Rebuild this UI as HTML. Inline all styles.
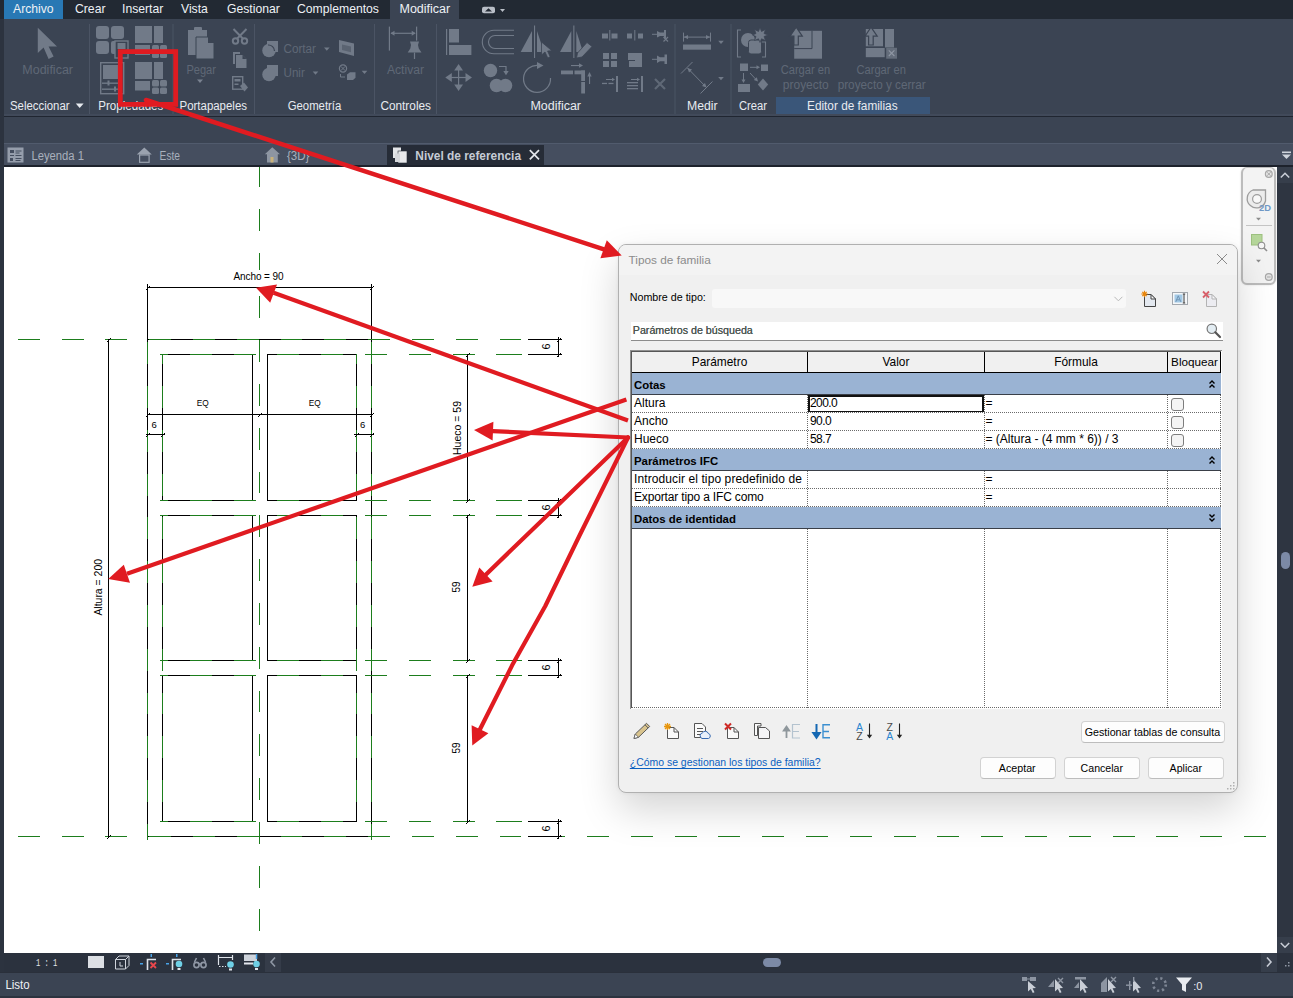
<!DOCTYPE html>
<html lang="es">
<head>
<meta charset="utf-8">
<title>Tipos de familia</title>
<style>
*{box-sizing:border-box;margin:0;padding:0}
html,body{width:1293px;height:998px;overflow:hidden;background:#3b4453;font-family:"Liberation Sans",sans-serif;font-size:12px;color:#e6e9ee}
.abs{position:absolute}
#app{position:relative;width:1293px;height:998px;overflow:hidden;background:#3b4453}
#menubar{left:0;top:0;width:1293px;height:19px;background:#222933}
#menubar span{position:absolute;top:1px;line-height:16px;font-size:12.2px;color:#eef1f5;white-space:nowrap}
#tab-archivo{left:4px;top:0;width:59px;height:19px;background:#2878b4}
#tab-modificar{left:390px;top:0;width:69px;height:19px;background:#3b4453}
#ribline{left:0;top:114px;width:1293px;height:3px;background:#202631;border-top:2px solid #414a5a}
#leftstrip{left:0;top:19px;width:4px;height:979px;background:#2c333f}
#vtabs{left:4px;top:143px;width:1289px;height:23px;background:#454e5f;border-top:1px solid #515b6d}
#vtab-active{left:387px;top:145px;width:157px;height:21px;background:#262c37}
#vline{left:4px;top:165px;width:1289px;height:2px;background:#1d222c}
#canvas{left:4px;top:167px;width:1273px;height:786px;background:#fff}
#vscroll{left:1277px;top:167px;width:16px;height:786px;background:#2e3541}
#vcb{left:4px;top:953px;width:1289px;height:19px;background:#2b323e}
#status{left:0;top:972px;width:1293px;height:26px;background:#3b4453;border-top:1px solid #2a303b;border-bottom:2px solid #2c333f}
#dlg{left:618px;top:244px;width:620px;height:549px;background:#f0f0f0;border:1px solid #b0b0b0;border-radius:8px;box-shadow:0 17px 38px rgba(0,0,0,.17),0 0 4px rgba(0,0,0,.06);color:#000;overflow:hidden}
#dlgin{left:-619px;top:-245px;width:1293px;height:998px}
.tx{position:absolute;white-space:nowrap;display:block}
.btn{position:absolute;height:22px;background:#fdfdfd;border:1px solid #d2d2d2;border-bottom-color:#bdbdbd;border-radius:4px}
.hd{height:1px;background-image:linear-gradient(90deg,#6a6a6a 50%,transparent 50%);background-size:2px 1px}
.vd{width:1px;background-image:linear-gradient(180deg,#6a6a6a 50%,transparent 50%);background-size:1px 2px}
</style>
</head>
<body>
<div id="app">
  <div id="menubar" class="abs">
    <div id="tab-archivo" class="abs"></div>
    <div id="tab-modificar" class="abs"></div>
    <span style="left:13px">Archivo</span>
    <span style="left:75px">Crear</span>
    <span style="left:122px">Insertar</span>
    <span style="left:181px">Vista</span>
    <span style="left:227px">Gestionar</span>
    <span style="left:297px">Complementos</span>
    <span style="left:399.5px;font-size:12.500px">Modificar</span>
    <svg class="abs" style="left:478px;top:3px" width="32" height="13" viewBox="0 0 32 13"><rect x="4" y="3.700" width="13" height="6.600" rx="2" fill="#b9bec7"/><path d="M7,8.500 L10.500,5.300 L14,8.500 Z" fill="#222933"/><path d="M22,6 L27,6 L24.500,9 Z" fill="#b9bec7"/></svg>
  </div>

<svg id="ribsvg" class="abs" style="left:0;top:0" width="1293" height="120" viewBox="0 0 1293 120">
<g fill="#717a88" stroke="none">
<!-- cursor -->
<path d="M37.8,27.8 L37.8,53 L43.6,47.6 L48.6,59 L53.6,56.6 L48.6,46.6 L57,46.4 Z"/>
<!-- propiedades icon1 -->
<rect x="96" y="26" width="13" height="13" rx="3"/><rect x="111" y="26" width="13" height="13" rx="3"/>
<rect x="96" y="41" width="13" height="13" rx="3"/><rect x="111" y="41" width="6" height="13" rx="2"/>
<rect x="115" y="41" width="13" height="17" fill="#3b4453" stroke="#717a88" stroke-width="1.4"/><rect x="117.500" y="43" width="8" height="6"/>
<!-- icon2 -->
<rect x="135" y="26" width="17" height="17"/><rect x="154" y="26" width="9" height="17"/><rect x="135" y="45" width="15" height="10"/>
<rect x="152" y="45" width="7" height="6" rx="1.5"/><rect x="160" y="45" width="7" height="6" rx="1.5"/><rect x="152" y="52" width="7" height="6" rx="1.5"/><rect x="160" y="52" width="7" height="6" rx="1.5"/>
<!-- icon3 -->
<rect x="100.700" y="62.700" width="23" height="31" fill="none" stroke="#717a88" stroke-width="1.4"/><rect x="103" y="65" width="18.500" height="14"/>
<rect x="102" y="82.500" width="20" height="1.400"/><rect x="102" y="88.500" width="20" height="1.400"/><rect x="107.500" y="80.500" width="2" height="5"/><rect x="114" y="86.500" width="2" height="5"/>
<!-- icon4 -->
<rect x="135" y="62" width="17" height="17"/><rect x="154" y="62" width="9" height="17"/><rect x="135" y="81" width="15" height="9.500"/>
<rect x="152" y="80" width="7" height="6.500" rx="1.500"/><rect x="160" y="80" width="7" height="6.500" rx="1.500"/><rect x="152" y="87.500" width="7" height="6.500" rx="1.500"/><rect x="160" y="87.500" width="7" height="6.500" rx="1.500"/>
<!-- paste -->
<rect x="188" y="30" width="19" height="25"/><rect x="194" y="27" width="8" height="4" rx="1"/>
<path d="M196,37 L208,37 L214,43 L214,59 L196,59 Z" stroke="#3b4453" stroke-width="1"/>
<path d="M208,37 L208,43 L214,43 Z" fill="#3b4453"/>
<path d="M197,79.500 L203,79.500 L200,83 Z" fill="#7a8391"/>
<!-- scissors -->
<g fill="none" stroke="#717a88" stroke-width="2"><circle cx="235.500" cy="41" r="2.700"/><circle cx="244.500" cy="41" r="2.700"/><path d="M233.500,29 L243,38.800 M246.500,29 L237,38.800"/></g>
<!-- copy -->
<path d="M233,52 L240,52 L240,54 L235,54 L235,64 L233,64 Z"/><path d="M236,55 L242.500,55 L246.500,59 L246.500,68 L236,68 Z"/><path d="M242.500,55 L242.500,59 L246.500,59 Z" fill="#3b4453"/>
<!-- match -->
<rect x="232.700" y="76.700" width="10" height="12.500" fill="none" stroke="#717a88" stroke-width="1.400"/><rect x="234.500" y="79" width="6" height="2.500"/><rect x="234.500" y="83.500" width="4" height="1.500"/>
<path d="M240,86 L244,82.500 L248,87.500 L244.500,91.500 Z"/>
<!-- cortar icon -->
<rect x="267" y="41" width="11" height="11"/><circle cx="269" cy="50.500" r="6.800"/><path d="M268,45 A6,6 0 0 1 274.500,51" fill="none" stroke="#3b4453" stroke-width="1.200"/>
<!-- unir icon -->
<rect x="267" y="65" width="11" height="11"/><circle cx="269" cy="74.500" r="6.800"/>
<path d="M324,47.600 L329.600,47.600 L326.800,50.800 Z"/><path d="M312.700,71.600 L318.300,71.600 L315.500,74.800 Z"/><path d="M361.700,70.800 L367.300,70.800 L364.500,74 Z"/>
<!-- geom icon 3 -->
<path d="M339,40 L354,43.500 L354,56 L339,52 Z"/><path d="M342,44.500 L351,46.500 L351,52.300 L342,50 Z" fill="#5a6371"/>
<!-- geom icon 4 -->
<circle cx="343" cy="68.500" r="3.600" fill="none" stroke="#717a88" stroke-width="1.200"/><path d="M340.800,66.300 L345.200,70.700 M345.200,66.300 L340.800,70.700" stroke="#717a88" stroke-width="1"/>
<path d="M340.500,74 L340.500,77 L345,77" fill="none" stroke="#717a88" stroke-width="1"/>
<path d="M347,74.500 L350,72.300 L355.500,72.300 L355.500,77.800 L353,80 L347,80 Z"/>
<!-- activar -->
<rect x="388.800" y="26.600" width="1.200" height="24"/><rect x="416" y="26.600" width="1.200" height="14"/><rect x="391" y="32.700" width="24" height="1.200"/>
<path d="M390.500,33.300 L394.500,30.800 L394.500,35.800 Z"/><path d="M415.700,33.300 L411.700,30.800 L411.700,35.800 Z"/>
<path d="M410,41.500 L419,41.500 L418,45 L418.800,48.500 L421.500,52.500 L407.700,52.500 L410.300,48.500 L411,45 Z"/><rect x="413.900" y="52.500" width="1.200" height="6.500"/>
<!-- align -->
<rect x="446" y="29" width="1.200" height="26"/><rect x="449" y="29" width="10" height="13.500"/><rect x="449" y="45" width="22.400" height="10"/>
<!-- move -->
<path d="M458.600,64 L463,70.500 L454.200,70.500 Z"/><path d="M458.600,91 L463,84.500 L454.200,84.500 Z"/><path d="M445.300,77.500 L451.800,73.100 L451.800,81.900 Z"/><path d="M472,77.500 L465.500,73.100 L465.500,81.900 Z"/>
<rect x="458" y="70" width="1.200" height="15"/><rect x="451" y="76.900" width="15" height="1.200"/>
<!-- offset -->
<g fill="none" stroke="#717a88" stroke-width="1.100"><path d="M514,30.300 L494,30.300 A11.700,11.700 0 0 0 494,53.700 L514,53.700"/><path d="M514,35.500 L495,35.500 A6.500,6.500 0 0 0 495,48.500 L514,48.500"/></g>
<!-- mirror pick -->
<path d="M520.700,52 L532,52 L532,31 Z"/><rect x="534" y="25.500" width="1.100" height="32.500"/><path d="M537,31 L537,52 L544,52 Z" />
<path d="M541.500,42 L541.500,55 L545,52 L547.800,58 L550.200,56.800 L547.600,51 L552,50.800 Z" stroke="#3b4453" stroke-width=".8"/>
<!-- mirror draw -->
<path d="M560,52 L571.300,52 L571.300,31 Z"/><rect x="573.300" y="25.500" width="1.100" height="32.500"/><path d="M576.300,31 L576.300,52 L583,52 Z"/>
<path d="M576.500,58 L577.500,53 L587,42.500 L592,46.500 L582,57 Z" stroke="#3b4453" stroke-width=".8"/>
<!-- copy circles -->
<circle cx="490.500" cy="70.500" r="6.700"/><circle cx="496.500" cy="85.500" r="6.800"/><circle cx="505.500" cy="85.500" r="6.800"/>
<path d="M499,66.500 L506,66.500 L506,72" fill="none" stroke="#717a88" stroke-width="1.200"/><path d="M503.300,71 L508.700,71 L506,75.300 Z"/>
<!-- rotate -->
<path d="M539,65.500 A13.500,13.500 0 1 0 550.500,78" fill="none" stroke="#717a88" stroke-width="1.200"/><path d="M537,62 L543.500,65.500 L537,69 Z"/>
<!-- trim -->
<rect x="561" y="70.500" width="12" height="3.800"/><rect x="574.500" y="70.500" width="10.500" height="3.800"/><rect x="581.200" y="70.500" width="3.800" height="10.500"/><rect x="581.200" y="82" width="3.800" height="11.500"/>
<rect x="571" y="65" width="10" height="1.100"/><path d="M583,65.500 L579,63.300 L579,67.700 Z"/><rect x="589" y="75" width="1.100" height="9"/><path d="M589.500,72 L587.300,76.500 L591.700,76.500 Z"/>
<!-- small icons col1 -->
<rect x="602" y="33.500" width="6" height="5"/><rect x="611.500" y="33.500" width="6" height="5"/><rect x="609.300" y="30" width="1" height="10.500"/>
<rect x="603" y="53" width="6" height="6"/><rect x="611" y="53" width="6" height="6"/><rect x="603" y="61" width="6" height="6"/><rect x="611" y="61" width="6" height="6"/>
<rect x="602" y="82.800" width="5" height="1.300"/><rect x="608.500" y="82.800" width="5" height="1.300"/><rect x="616" y="76" width="2" height="16"/><rect x="606" y="79" width="7" height="1"/><path d="M615,79.500 L612,77.800 L612,81.200 Z"/>
<!-- col2 -->
<rect x="627" y="33.500" width="5" height="5"/><rect x="638" y="33.500" width="5" height="5"/><rect x="634.300" y="30" width="1" height="10.500"/>
<path d="M628,53 L642,53 L642,67 L628,67 Z"/><rect x="628" y="60" width="7" height="7" fill="#3b4453"/><rect x="629" y="61" width="6" height="6"/>
<rect x="627" y="82" width="11" height="1.300"/><rect x="627" y="85" width="11" height="1.300"/><rect x="627" y="88" width="11" height="1.300"/><rect x="641" y="76" width="2" height="16"/><rect x="631" y="79" width="7" height="1"/><path d="M640,79.500 L637,77.800 L637,81.200 Z"/>
<!-- col3 pins -->
<rect x="652" y="33.800" width="5" height="1"/><path d="M657,31 L660,32.500 L664,32.500 L664,30 L666,30 L666,38.500 L664,38.500 L664,36 L660,36 L657,37.500 Z"/><path d="M663.500,37 L668,41.500 M668,37 L663.500,41.500" stroke="#717a88" stroke-width="1.200"/>
<rect x="652" y="58.800" width="5" height="1"/><path d="M657,55.500 L660,57.300 L664.500,57.300 L664.500,54.500 L667,54.500 L667,64 L664.500,64 L664.500,61.200 L660,61.200 L657,63 Z"/>
<path d="M655,79 L665,89 M665,79 L655,89" stroke="#5f6876" stroke-width="2.200"/>
<!-- measure -->
<rect x="683" y="32.600" width="1" height="9"/><rect x="710" y="32.600" width="1" height="9"/><rect x="684" y="36.600" width="26" height="1"/><path d="M684,37.100 L688,35 L688,39.200 Z"/><path d="M710,37.100 L706,35 L706,39.200 Z"/>
<rect x="683" y="44.500" width="28" height="5.200"/>
<path d="M718.200,40.800 L723.800,40.800 L721,44 Z"/><path d="M718.200,77 L723.800,77 L721,80.200 Z"/>
<!-- aligned dim -->
<g stroke="#717a88" stroke-width="1" fill="none"><path d="M681,73.500 L692.500,62 M700.500,93.500 L712.500,81.500 M687.500,68 L706.500,87.500"/></g>
<path d="M687.500,68 L692,69.500 L689,72.500 Z"/><path d="M706.500,87.500 L702,86 L705,83 Z"/>
<!-- crear 1 -->
<g fill="none" stroke="#717a88" stroke-width="1.100"><path d="M741,30 L737.500,30 L737.500,57 L741,57"/><path d="M762,42 L765.500,42 L765.500,57 L762,57"/></g>
<circle cx="748" cy="40" r="7"/><rect x="748.500" y="40" width="13" height="14" rx="2.500" stroke="#3b4453" stroke-width="1"/>
<path d="M760,27.400 L761.500,31.500 L765.500,29.500 L764,33.500 L768,35 L764,36.500 L765.500,40.500 L761.500,38.800 L760,42.500 L758.500,38.800 L754.500,40.500 L756,36.500 L752.500,35 L756,33.500 L754.500,29.500 L758.500,31.500 Z" stroke="#3b4453" stroke-width=".7"/>
<!-- crear 2 -->
<rect x="740" y="63.500" width="8" height="7.500"/><rect x="761" y="64.500" width="7" height="6.500"/><rect x="738" y="84" width="12" height="8"/><path d="M763,78.500 L768.200,84.500 L763,90.500 L757.800,84.500 Z"/>
<rect x="750" y="66.800" width="7" height="1"/><path d="M760,67.300 L756.500,65.300 L756.500,69.300 Z"/><rect x="743" y="73" width="1" height="7"/><path d="M743.500,83 L741.500,79.500 L745.500,79.500 Z"/>
<path d="M750,73 L756,79.500" stroke="#717a88" stroke-width="1"/><path d="M758,81.500 L753.800,80 L756.800,77.200 Z"/>
<!-- cargar en proyecto -->
<rect x="794.200" y="30.800" width="27.800" height="27.900"/>
<path d="M794.200,48.600 L812,48.600 L812,30.800" fill="none" stroke="#3b4453" stroke-width="1"/>
<path d="M796.200,27.200 L802.300,36.200 L798.300,36.200 L798.300,45 L793.900,45 L793.900,36.200 L790,36.200 Z" stroke="#3b4453" stroke-width="1.200"/>
<!-- cargar y cerrar -->
<rect x="865.800" y="29" width="17.200" height="17.300"/><rect x="885" y="29" width="9" height="18.500"/><rect x="865.800" y="48" width="18.900" height="9.200"/>
<rect x="886.200" y="47.800" width="10.800" height="10.900" fill="#646d7b"/><path d="M888.800,50.400 L894.400,56 M894.400,50.400 L888.800,56" stroke="#8f97a4" stroke-width="1.100"/>
<path d="M871,27.200 L877.200,36.200 L873.200,36.200 L873.200,45 L868.600,45 L868.600,36.200 L865,36.200 Z" stroke="#3b4453" stroke-width="1.200"/>
</g>
<!-- separators -->
<g fill="#4b5464"><rect x="89" y="24" width="1" height="90"/><rect x="172.500" y="24" width="1" height="90"/><rect x="254" y="24" width="1" height="90"/><rect x="374" y="24" width="1" height="90"/><rect x="436" y="24" width="1" height="90"/><rect x="674.500" y="24" width="1" height="90"/><rect x="730.500" y="24" width="1" height="90"/></g>
<rect x="776" y="97" width="154" height="18" fill="#3a5679"/>
<g font-family="'Liberation Sans',sans-serif" font-size="12" fill="#5f6876">
<text x="22.300" y="73.700" textLength="50.700" lengthAdjust="spacingAndGlyphs">Modificar</text>
<text x="186.400" y="73.700" textLength="29.600" lengthAdjust="spacingAndGlyphs">Pegar</text>
<text x="283.500" y="52.800" textLength="32.500" lengthAdjust="spacingAndGlyphs">Cortar</text>
<text x="283.500" y="76.800" textLength="21.300" lengthAdjust="spacingAndGlyphs">Unir</text>
<text x="387" y="73.700" textLength="37" lengthAdjust="spacingAndGlyphs">Activar</text>
<text x="780.700" y="74" textLength="49.500" lengthAdjust="spacingAndGlyphs">Cargar en</text>
<text x="782.800" y="89" textLength="46" lengthAdjust="spacingAndGlyphs">proyecto</text>
<text x="856.500" y="74" textLength="49.500" lengthAdjust="spacingAndGlyphs">Cargar en</text>
<text x="837.700" y="89" textLength="88" lengthAdjust="spacingAndGlyphs">proyecto y cerrar</text>
</g>
<g font-family="'Liberation Sans',sans-serif" font-size="12" fill="#e8ebf0">
<text x="10" y="110" textLength="59.600" lengthAdjust="spacingAndGlyphs">Seleccionar</text>
<text x="98.300" y="110" textLength="65" lengthAdjust="spacingAndGlyphs">Propiedades</text>
<text x="179.500" y="110" textLength="67.500" lengthAdjust="spacingAndGlyphs">Portapapeles</text>
<text x="287.700" y="110" textLength="53.600" lengthAdjust="spacingAndGlyphs">Geometría</text>
<text x="380.400" y="110" textLength="50.600" lengthAdjust="spacingAndGlyphs">Controles</text>
<text x="530.400" y="110" textLength="50.600" lengthAdjust="spacingAndGlyphs">Modificar</text>
<text x="687" y="110" textLength="30.600" lengthAdjust="spacingAndGlyphs">Medir</text>
<text x="739" y="110" textLength="28" lengthAdjust="spacingAndGlyphs">Crear</text>
<text x="807" y="110" textLength="90.600" lengthAdjust="spacingAndGlyphs">Editor de familias</text>
</g>
<path d="M75.800,103.500 L83.600,103.500 L79.700,108 Z" fill="#e8ebf0"/>
</svg>
  <div id="ribline" class="abs"></div>
  <div id="leftstrip" class="abs"></div>
  <div id="vtabs" class="abs"></div>
  <div id="vtab-active" class="abs"></div>
  <div id="vline" class="abs"></div>
  <svg id="vtabsvg" class="abs" style="left:0;top:140px" width="1293" height="30" viewBox="0 140 1293 30">
    <!-- leyenda icon -->
    <rect x="7.500" y="147.500" width="16" height="15" fill="#959dab"/>
    <g fill="#454e5f"><rect x="10" y="150" width="4" height="3"/><rect x="15.500" y="150.500" width="6" height="1"/><rect x="15.500" y="152.500" width="4" height="1"/><rect x="10" y="155" width="4" height="1"/><rect x="15.500" y="155" width="6" height="1"/><rect x="10" y="158" width="3" height="3"/><rect x="15.500" y="158" width="6" height="1"/><rect x="15.500" y="160" width="5" height="1"/></g>
    <!-- este icon -->
    <path d="M144.300,147.500 L151.800,154.500 L136.800,154.500 Z" fill="#9aa2af"/><rect x="139.600" y="155" width="9.500" height="7.300" fill="none" stroke="#9aa2af" stroke-width="1.200"/>
    <!-- 3D house -->
    <path d="M272.300,147.300 L280,154.300 L277.800,154.300 L277.800,162.500 L267,162.500 L267,154.300 L264.800,154.300 Z" fill="#8d95a2"/><rect x="270.500" y="157" width="3" height="5.500" fill="#c9b27a"/>
    <!-- active icon -->
    <rect x="393" y="147.500" width="8" height="10.500" fill="#e3e5e8"/><rect x="398" y="151" width="9" height="12" fill="#e9eaec" stroke="#262c37" stroke-width=".6"/><rect x="395" y="153.500" width="5" height="8.500" fill="#d6d8dc"/>
    <path d="M529.800,150.200 L539,159.400 M539,150.200 L529.800,159.400" stroke="#e4e7ec" stroke-width="1.700"/>
    <g font-family="'Liberation Sans',sans-serif" font-size="12" fill="#a9b0bc">
      <text x="31.400" y="160.300" textLength="52.600" lengthAdjust="spacingAndGlyphs">Leyenda 1</text>
      <text x="159.600" y="160.300" textLength="20.400" lengthAdjust="spacingAndGlyphs">Este</text>
      <text x="287" y="160.300" textLength="22.400" lengthAdjust="spacingAndGlyphs">{3D}</text>
      <text x="415.300" y="160.300" textLength="105.700" lengthAdjust="spacingAndGlyphs" font-weight="bold" fill="#c5cbd5">Nivel de referencia</text>
    </g>
    <g fill="#cfd4dc"><rect x="1282" y="151.500" width="9" height="1.600"/><path d="M1282,154.500 L1291,154.500 L1286.500,159 Z"/></g>
  </svg>
  <div id="canvas" class="abs"></div>
  <div id="vscroll" class="abs">
    <div class="abs" style="left:0;top:0;width:16px;height:16px;background:#363e4b"></div>
    <div class="abs" style="left:0;top:770px;width:16px;height:16px;background:#363e4b"></div>
    <div class="abs" style="left:4px;top:385px;width:9px;height:17px;border-radius:4.500px;background:#7c8aa6"></div>
    <svg class="abs" style="left:0;top:0" width="16" height="786" viewBox="0 0 16 786"><path d="M3.800,10.500 L8,6.300 L12.200,10.500 M3.800,776 L8,780.200 L12.200,776" stroke="#c7ccd5" stroke-width="1.600" fill="none"/></svg>
  </div>
  <div id="vcb" class="abs">
    <div class="abs" style="left:261px;top:0;width:16px;height:19px;background:#353c49"></div>
    <div class="abs" style="left:1257px;top:0;width:16px;height:19px;background:#363e4b"></div>
    <div class="abs" style="left:759px;top:5px;width:18px;height:9px;border-radius:4.500px;background:#7c8aa6"></div>
    <svg class="abs" style="left:0;top:0" width="1289" height="19" viewBox="4 953 1289 19">
      <text x="36" y="966" font-family="'Liberation Mono',monospace" font-size="10.500" fill="#e3e6ec" textLength="21.400" lengthAdjust="spacingAndGlyphs" xml:space="preserve">1 : 1</text>
      <rect x="88" y="956" width="16" height="12" fill="#dcdfe4"/>
      <g fill="none" stroke="#cfd4dc" stroke-width="1"><path d="M115.500,959.500 L125.500,959.500 L125.500,969 L115.500,969 Z M115.500,959.500 L119,956 L129,956 L129,965.500 L125.500,969 M125.500,959.500 L129,956"/><path d="M120,962 L120,966 L123,966"/></g>
      <g fill="none" stroke="#dfe3ea" stroke-width="1.600"><path d="M147.500,970 L147.500,959.500 L156,959.500"/><path d="M172.500,970 L172.500,959.500 L181,959.500"/></g>
      <g fill="#49a3e8"><rect x="140" y="963" width="3" height="1.500"/><rect x="150.500" y="954" width="1.500" height="3"/><rect x="166" y="963" width="3" height="1.500"/><rect x="176" y="954" width="1.500" height="3"/></g>
      <path d="M150.500,962.500 L156,968 M156,962.500 L150.500,968" stroke="#e8474c" stroke-width="1.800"/>
      <circle cx="179" cy="964" r="3.300" fill="#6fd0e6"/><rect x="177.500" y="968" width="3" height="2" fill="#e3e6ec"/>
      <g fill="none" stroke="#8f97a4" stroke-width="1.600"><circle cx="196.500" cy="965" r="2.600"/><circle cx="203.500" cy="965" r="2.600"/><path d="M194.500,962 L196.500,958 M205.500,962 L203.500,958 M199,964 L201,964"/></g>
      <g stroke="#dfe3ea" stroke-width="1.200" fill="none"><path d="M218.500,955 L218.500,965 M232.500,955 L232.500,960 M219,957.500 L232,957.500"/><path d="M219,966.500 L226,966.500" stroke-dasharray="1.500 1.500"/></g>
      <circle cx="230.500" cy="964.500" r="3.300" fill="#6fd0e6"/><rect x="229" y="968.500" width="3" height="2" fill="#e3e6ec"/>
      <rect x="244" y="954.500" width="13" height="6.500" fill="#cfd4dc"/><rect x="244" y="962.500" width="9" height="2" fill="#e3e6ec"/>
      <circle cx="256.500" cy="964" r="3.300" fill="#6fd0e6"/><rect x="255" y="968" width="3" height="2" fill="#e3e6ec"/><rect x="255.800" y="954" width="1.500" height="5" fill="#49a3e8"/>
      <path d="M275,957.500 L271,962 L275,966.500" stroke="#8f97a4" stroke-width="1.600" fill="none"/>
      <path d="M1267,957.500 L1271,962 L1267,966.500" stroke="#c7ccd5" stroke-width="1.600" fill="none"/>
      <g fill="#8f97a4"><rect x="1288" y="962" width="1.500" height="1.500"/><rect x="1285" y="965" width="1.500" height="1.500"/><rect x="1288" y="965" width="1.500" height="1.500"/></g>
    </svg>
  </div>
  <div id="status" class="abs">
    <svg class="abs" style="left:0;top:-1px" width="1293" height="26" viewBox="0 972 1293 26">
      <text x="5.400" y="988.800" font-family="'Liberation Sans',sans-serif" font-size="12" fill="#f0f2f5" textLength="24.300" lengthAdjust="spacingAndGlyphs">Listo</text>
      <g fill="#c9ced6">
        <path d="M1028,981 L1028,991.500 L1030.800,989 L1032.800,993 L1034.500,992.200 L1032.600,988.300 L1036,988 Z"/>
        <path d="M1055,979 L1055,991.500 L1057.800,989 L1059.800,993 L1061.500,992.200 L1059.600,988.300 L1063,988 Z"/>
        <path d="M1080,979 L1080,991.500 L1082.800,989 L1084.800,993 L1086.500,992.200 L1084.600,988.300 L1088,988 Z"/>
        <path d="M1108,979 L1108,991.500 L1110.800,989 L1112.800,993 L1114.500,992.200 L1112.600,988.300 L1116,988 Z"/>
        <path d="M1133,979 L1133,991.500 L1135.800,989 L1137.800,993 L1139.500,992.200 L1137.600,988.300 L1141,988 Z"/>
      </g>
      <g fill="#8d95a2">
        <rect x="1022" y="977" width="5" height="4"/><rect x="1030" y="977" width="6" height="4"/><rect x="1026" y="978.500" width="5" height="1"/>
        <path d="M1048,987 L1054,980 L1054,987 Z"/><path d="M1058,978 L1063,983 M1063,978 L1058,983" stroke="#8d95a2" stroke-width="1.400"/>
        <rect x="1075" y="977" width="11" height="2.500"/><path d="M1074,988 L1079,982 L1079,988 Z"/>
        <path d="M1101,983 L1107,977 L1107,992 L1101,992 Z"/><path d="M1111,977 L1116,982 M1116,977 L1111,982" stroke="#8d95a2" stroke-width="1.400"/>
        <rect x="1126" y="984.500" width="6" height="1.400"/><rect x="1129" y="981" width="1.400" height="9"/><rect x="1133" y="977" width="1.400" height="5"/>
      </g>
      <circle cx="1159.500" cy="984.500" r="6.300" fill="none" stroke="#7e8694" stroke-width="2.600" stroke-dasharray="2.200 2.750"/>
      <path d="M1176,977.500 L1192,977.500 L1186,984.500 L1186,992 L1182,990 L1182,984.500 Z" fill="#e8ebf0"/>
      <text x="1193.300" y="990" font-family="'Liberation Sans',sans-serif" font-size="11" fill="#e8ebf0">:0</text>
    </svg>
  </div>
  <!-- navigation bar -->
  <div class="abs" style="left:1241px;top:167px;width:35px;height:118px;background:#f3f3f3;border:2px solid #bcbcbc;border-top-width:1px;border-radius:6px;box-shadow:0 0 2px rgba(0,0,0,.15)"></div>
  <svg class="abs" style="left:1241px;top:167px" width="36" height="118" viewBox="1241 167 36 118">
    <circle cx="1268.800" cy="174" r="3.400" fill="#e4e4e4" stroke="#a8a8a8" stroke-width="1.200"/><path d="M1267,172.200 L1270.600,175.800 M1270.600,172.200 L1267,175.800" stroke="#a8a8a8" stroke-width="1"/>
    <path d="M1253,190 L1265.500,190 L1265.500,201 A9.300,9.300 0 1 1 1253,190 Z" fill="#ececec" stroke="#9d9d9d" stroke-width="1.300"/>
    <circle cx="1257" cy="199" r="4.400" fill="#f8f8f8" stroke="#9d9d9d" stroke-width="1.200"/>
    <text x="1259" y="210.800" font-family="'Liberation Sans',sans-serif" font-size="9" font-weight="bold" fill="#6f98c6" textLength="12" lengthAdjust="spacingAndGlyphs">2D</text>
    <path d="M1256,217.800 L1261,217.800 L1258.500,220.600 Z" fill="#8c8c8c"/>
    <rect x="1246" y="225" width="26" height="1" fill="#c4c4c4"/>
    <rect x="1251.500" y="234.500" width="10.500" height="10.500" fill="#b5d69a" stroke="#9cc07f" stroke-width="1"/>
    <circle cx="1261.500" cy="245.500" r="3.300" fill="#f6f6f6" stroke="#8e8e8e" stroke-width="1.100"/><path d="M1264,248 L1267,251" stroke="#8e8e8e" stroke-width="1.600"/>
    <path d="M1256,259.800 L1261,259.800 L1258.500,262.600 Z" fill="#8c8c8c"/>
    <circle cx="1268.800" cy="277" r="3.400" fill="#e4e4e4" stroke="#a8a8a8" stroke-width="1.200"/><rect x="1267" y="276.500" width="3.600" height="1" fill="#a8a8a8"/>
  </svg>

<svg id="draw" class="abs" style="left:0;top:0" width="1293" height="998" viewBox="0 0 1293 998" shape-rendering="crispEdges">
<rect x="147" y="339" width="225" height="1" fill="#000"/>
<rect x="147" y="836" width="225" height="1" fill="#000"/>
<rect x="147" y="284" width="1" height="553" fill="#000"/>
<rect x="371" y="284" width="1" height="553" fill="#000"/>
<rect x="162" y="354" width="91" height="1" fill="#000"/>
<rect x="162" y="500" width="91" height="1" fill="#000"/>
<rect x="162" y="354" width="1" height="147" fill="#000"/>
<rect x="252" y="354" width="1" height="147" fill="#000"/>
<rect x="267" y="354" width="90" height="1" fill="#000"/>
<rect x="267" y="500" width="90" height="1" fill="#000"/>
<rect x="267" y="354" width="1" height="147" fill="#000"/>
<rect x="356" y="354" width="1" height="147" fill="#000"/>
<rect x="162" y="515" width="91" height="1" fill="#000"/>
<rect x="162" y="660" width="91" height="1" fill="#000"/>
<rect x="162" y="515" width="1" height="146" fill="#000"/>
<rect x="252" y="515" width="1" height="146" fill="#000"/>
<rect x="267" y="515" width="90" height="1" fill="#000"/>
<rect x="267" y="660" width="90" height="1" fill="#000"/>
<rect x="267" y="515" width="1" height="146" fill="#000"/>
<rect x="356" y="515" width="1" height="146" fill="#000"/>
<rect x="162" y="675" width="91" height="1" fill="#000"/>
<rect x="162" y="821" width="91" height="1" fill="#000"/>
<rect x="162" y="675" width="1" height="147" fill="#000"/>
<rect x="252" y="675" width="1" height="147" fill="#000"/>
<rect x="267" y="675" width="90" height="1" fill="#000"/>
<rect x="267" y="821" width="90" height="1" fill="#000"/>
<rect x="267" y="675" width="1" height="147" fill="#000"/>
<rect x="356" y="675" width="1" height="147" fill="#000"/>
<rect x="17.8" y="339" width="21.9" height="1" fill="#1d7d1d"/><rect x="61.6" y="339" width="21.9" height="1" fill="#1d7d1d"/><rect x="105.4" y="339" width="21.9" height="1" fill="#1d7d1d"/><rect x="149.2" y="339" width="21.9" height="1" fill="#1d7d1d"/><rect x="193.0" y="339" width="21.9" height="1" fill="#1d7d1d"/><rect x="236.8" y="339" width="21.8" height="1" fill="#1d7d1d"/><rect x="280.5" y="339" width="21.9" height="1" fill="#1d7d1d"/><rect x="324.3" y="339" width="21.9" height="1" fill="#1d7d1d"/><rect x="368.1" y="339" width="21.9" height="1" fill="#1d7d1d"/><rect x="411.9" y="339" width="21.9" height="1" fill="#1d7d1d"/><rect x="455.7" y="339" width="21.9" height="1" fill="#1d7d1d"/><rect x="499.5" y="339" width="21.9" height="1" fill="#1d7d1d"/>
<rect x="17.8" y="836" width="21.9" height="1" fill="#1d7d1d"/><rect x="61.6" y="836" width="21.9" height="1" fill="#1d7d1d"/><rect x="105.4" y="836" width="21.9" height="1" fill="#1d7d1d"/><rect x="149.2" y="836" width="21.9" height="1" fill="#1d7d1d"/><rect x="193.0" y="836" width="21.9" height="1" fill="#1d7d1d"/><rect x="236.8" y="836" width="21.8" height="1" fill="#1d7d1d"/><rect x="280.5" y="836" width="21.9" height="1" fill="#1d7d1d"/><rect x="324.3" y="836" width="21.9" height="1" fill="#1d7d1d"/><rect x="368.1" y="836" width="21.9" height="1" fill="#1d7d1d"/><rect x="411.9" y="836" width="21.9" height="1" fill="#1d7d1d"/><rect x="455.7" y="836" width="21.9" height="1" fill="#1d7d1d"/><rect x="499.5" y="836" width="21.9" height="1" fill="#1d7d1d"/><rect x="543.3" y="836" width="21.9" height="1" fill="#1d7d1d"/><rect x="587.1" y="836" width="21.9" height="1" fill="#1d7d1d"/><rect x="630.9" y="836" width="21.9" height="1" fill="#1d7d1d"/><rect x="674.6" y="836" width="21.9" height="1" fill="#1d7d1d"/><rect x="718.4" y="836" width="21.9" height="1" fill="#1d7d1d"/><rect x="762.2" y="836" width="21.9" height="1" fill="#1d7d1d"/><rect x="806.0" y="836" width="21.9" height="1" fill="#1d7d1d"/><rect x="849.8" y="836" width="21.9" height="1" fill="#1d7d1d"/><rect x="893.6" y="836" width="21.9" height="1" fill="#1d7d1d"/><rect x="937.4" y="836" width="21.9" height="1" fill="#1d7d1d"/><rect x="981.2" y="836" width="21.9" height="1" fill="#1d7d1d"/><rect x="1025.0" y="836" width="21.9" height="1" fill="#1d7d1d"/><rect x="1068.8" y="836" width="21.9" height="1" fill="#1d7d1d"/><rect x="1112.5" y="836" width="22.0" height="1" fill="#1d7d1d"/><rect x="1156.3" y="836" width="21.9" height="1" fill="#1d7d1d"/><rect x="1200.1" y="836" width="21.9" height="1" fill="#1d7d1d"/><rect x="1243.9" y="836" width="21.9" height="1" fill="#1d7d1d"/>
<rect x="160" y="354" width="8.0" height="1" fill="#1d7d1d"/><rect x="189.8" y="354" width="21.9" height="1" fill="#1d7d1d"/><rect x="233.6" y="354" width="21.9" height="1" fill="#1d7d1d"/><rect x="277.4" y="354" width="21.9" height="1" fill="#1d7d1d"/><rect x="321.2" y="354" width="21.9" height="1" fill="#1d7d1d"/><rect x="365.0" y="354" width="21.9" height="1" fill="#1d7d1d"/><rect x="408.8" y="354" width="21.9" height="1" fill="#1d7d1d"/><rect x="452.6" y="354" width="21.9" height="1" fill="#1d7d1d"/><rect x="496.4" y="354" width="21.9" height="1" fill="#1d7d1d"/>
<rect x="518" y="354" width="4" height="1" fill="#1d7d1d"/>
<rect x="160" y="500" width="8.0" height="1" fill="#1d7d1d"/><rect x="189.8" y="500" width="21.9" height="1" fill="#1d7d1d"/><rect x="233.6" y="500" width="21.9" height="1" fill="#1d7d1d"/><rect x="277.4" y="500" width="21.9" height="1" fill="#1d7d1d"/><rect x="321.2" y="500" width="21.9" height="1" fill="#1d7d1d"/><rect x="365.0" y="500" width="21.9" height="1" fill="#1d7d1d"/><rect x="408.8" y="500" width="21.9" height="1" fill="#1d7d1d"/><rect x="452.6" y="500" width="21.9" height="1" fill="#1d7d1d"/><rect x="496.4" y="500" width="21.9" height="1" fill="#1d7d1d"/>
<rect x="518" y="500" width="4" height="1" fill="#1d7d1d"/>
<rect x="160" y="515" width="8.0" height="1" fill="#1d7d1d"/><rect x="189.8" y="515" width="21.9" height="1" fill="#1d7d1d"/><rect x="233.6" y="515" width="21.9" height="1" fill="#1d7d1d"/><rect x="277.4" y="515" width="21.9" height="1" fill="#1d7d1d"/><rect x="321.2" y="515" width="21.9" height="1" fill="#1d7d1d"/><rect x="365.0" y="515" width="21.9" height="1" fill="#1d7d1d"/><rect x="408.8" y="515" width="21.9" height="1" fill="#1d7d1d"/><rect x="452.6" y="515" width="21.9" height="1" fill="#1d7d1d"/><rect x="496.4" y="515" width="21.9" height="1" fill="#1d7d1d"/>
<rect x="518" y="515" width="4" height="1" fill="#1d7d1d"/>
<rect x="160" y="660" width="8.0" height="1" fill="#1d7d1d"/><rect x="189.8" y="660" width="21.9" height="1" fill="#1d7d1d"/><rect x="233.6" y="660" width="21.9" height="1" fill="#1d7d1d"/><rect x="277.4" y="660" width="21.9" height="1" fill="#1d7d1d"/><rect x="321.2" y="660" width="21.9" height="1" fill="#1d7d1d"/><rect x="365.0" y="660" width="21.9" height="1" fill="#1d7d1d"/><rect x="408.8" y="660" width="21.9" height="1" fill="#1d7d1d"/><rect x="452.6" y="660" width="21.9" height="1" fill="#1d7d1d"/><rect x="496.4" y="660" width="21.9" height="1" fill="#1d7d1d"/>
<rect x="518" y="660" width="4" height="1" fill="#1d7d1d"/>
<rect x="160" y="675" width="8.0" height="1" fill="#1d7d1d"/><rect x="189.8" y="675" width="21.9" height="1" fill="#1d7d1d"/><rect x="233.6" y="675" width="21.9" height="1" fill="#1d7d1d"/><rect x="277.4" y="675" width="21.9" height="1" fill="#1d7d1d"/><rect x="321.2" y="675" width="21.9" height="1" fill="#1d7d1d"/><rect x="365.0" y="675" width="21.9" height="1" fill="#1d7d1d"/><rect x="408.8" y="675" width="21.9" height="1" fill="#1d7d1d"/><rect x="452.6" y="675" width="21.9" height="1" fill="#1d7d1d"/><rect x="496.4" y="675" width="21.9" height="1" fill="#1d7d1d"/>
<rect x="518" y="675" width="4" height="1" fill="#1d7d1d"/>
<rect x="160" y="821" width="8.0" height="1" fill="#1d7d1d"/><rect x="189.8" y="821" width="21.9" height="1" fill="#1d7d1d"/><rect x="233.6" y="821" width="21.9" height="1" fill="#1d7d1d"/><rect x="277.4" y="821" width="21.9" height="1" fill="#1d7d1d"/><rect x="321.2" y="821" width="21.9" height="1" fill="#1d7d1d"/><rect x="365.0" y="821" width="21.9" height="1" fill="#1d7d1d"/><rect x="408.8" y="821" width="21.9" height="1" fill="#1d7d1d"/><rect x="452.6" y="821" width="21.9" height="1" fill="#1d7d1d"/><rect x="496.4" y="821" width="21.9" height="1" fill="#1d7d1d"/>
<rect x="518" y="821" width="4" height="1" fill="#1d7d1d"/>
<rect x="147" y="342.2" width="1" height="21.9" fill="#1d7d1d"/><rect x="147" y="386.0" width="1" height="21.9" fill="#1d7d1d"/><rect x="147" y="429.8" width="1" height="21.9" fill="#1d7d1d"/><rect x="147" y="473.6" width="1" height="21.9" fill="#1d7d1d"/><rect x="147" y="517.4" width="1" height="21.9" fill="#1d7d1d"/><rect x="147" y="561.2" width="1" height="21.9" fill="#1d7d1d"/><rect x="147" y="605.0" width="1" height="21.9" fill="#1d7d1d"/><rect x="147" y="648.7" width="1" height="21.9" fill="#1d7d1d"/><rect x="147" y="692.5" width="1" height="21.9" fill="#1d7d1d"/><rect x="147" y="736.3" width="1" height="21.9" fill="#1d7d1d"/><rect x="147" y="780.1" width="1" height="21.9" fill="#1d7d1d"/><rect x="147" y="823.9" width="1" height="16.1" fill="#1d7d1d"/>
<rect x="371" y="342.2" width="1" height="21.9" fill="#1d7d1d"/><rect x="371" y="386.0" width="1" height="21.9" fill="#1d7d1d"/><rect x="371" y="429.8" width="1" height="21.9" fill="#1d7d1d"/><rect x="371" y="473.6" width="1" height="21.9" fill="#1d7d1d"/><rect x="371" y="517.4" width="1" height="21.9" fill="#1d7d1d"/><rect x="371" y="561.2" width="1" height="21.9" fill="#1d7d1d"/><rect x="371" y="605.0" width="1" height="21.9" fill="#1d7d1d"/><rect x="371" y="648.7" width="1" height="21.9" fill="#1d7d1d"/><rect x="371" y="692.5" width="1" height="21.9" fill="#1d7d1d"/><rect x="371" y="736.3" width="1" height="21.9" fill="#1d7d1d"/><rect x="371" y="780.1" width="1" height="21.9" fill="#1d7d1d"/><rect x="371" y="823.9" width="1" height="16.1" fill="#1d7d1d"/>
<rect x="162" y="354" width="1" height="10.1" fill="#1d7d1d"/><rect x="162" y="386.0" width="1" height="21.9" fill="#1d7d1d"/><rect x="162" y="429.8" width="1" height="21.9" fill="#1d7d1d"/><rect x="162" y="473.6" width="1" height="21.9" fill="#1d7d1d"/><rect x="162" y="517.4" width="1" height="21.9" fill="#1d7d1d"/><rect x="162" y="561.2" width="1" height="21.9" fill="#1d7d1d"/><rect x="162" y="605.0" width="1" height="21.9" fill="#1d7d1d"/><rect x="162" y="648.7" width="1" height="21.9" fill="#1d7d1d"/><rect x="162" y="692.5" width="1" height="21.9" fill="#1d7d1d"/><rect x="162" y="736.3" width="1" height="21.9" fill="#1d7d1d"/><rect x="162" y="780.1" width="1" height="21.9" fill="#1d7d1d"/>
<rect x="356" y="354" width="1" height="10.1" fill="#1d7d1d"/><rect x="356" y="386.0" width="1" height="21.9" fill="#1d7d1d"/><rect x="356" y="429.8" width="1" height="21.9" fill="#1d7d1d"/><rect x="356" y="473.6" width="1" height="21.9" fill="#1d7d1d"/><rect x="356" y="517.4" width="1" height="21.9" fill="#1d7d1d"/><rect x="356" y="561.2" width="1" height="21.9" fill="#1d7d1d"/><rect x="356" y="605.0" width="1" height="21.9" fill="#1d7d1d"/><rect x="356" y="648.7" width="1" height="21.9" fill="#1d7d1d"/><rect x="356" y="692.5" width="1" height="21.9" fill="#1d7d1d"/><rect x="356" y="736.3" width="1" height="21.9" fill="#1d7d1d"/><rect x="356" y="780.1" width="1" height="21.9" fill="#1d7d1d"/>
<rect x="259" y="167" width="1" height="19.9" fill="#1d7d1d"/><rect x="259" y="208.8" width="1" height="21.9" fill="#1d7d1d"/><rect x="259" y="252.6" width="1" height="21.9" fill="#1d7d1d"/><rect x="259" y="296.4" width="1" height="21.9" fill="#1d7d1d"/><rect x="259" y="340.2" width="1" height="21.9" fill="#1d7d1d"/><rect x="259" y="383.9" width="1" height="21.9" fill="#1d7d1d"/><rect x="259" y="427.7" width="1" height="21.9" fill="#1d7d1d"/><rect x="259" y="471.5" width="1" height="21.9" fill="#1d7d1d"/><rect x="259" y="515.3" width="1" height="21.9" fill="#1d7d1d"/><rect x="259" y="559.1" width="1" height="21.9" fill="#1d7d1d"/><rect x="259" y="602.9" width="1" height="21.9" fill="#1d7d1d"/><rect x="259" y="646.7" width="1" height="21.9" fill="#1d7d1d"/><rect x="259" y="690.5" width="1" height="21.9" fill="#1d7d1d"/><rect x="259" y="734.3" width="1" height="21.9" fill="#1d7d1d"/><rect x="259" y="778.1" width="1" height="21.9" fill="#1d7d1d"/><rect x="259" y="821.9" width="1" height="21.9" fill="#1d7d1d"/><rect x="259" y="865.6" width="1" height="21.9" fill="#1d7d1d"/><rect x="259" y="909.4" width="1" height="21.9" fill="#1d7d1d"/>
<rect x="147" y="287" width="225" height="1" fill="#000"/>
<rect x="108" y="339" width="1" height="498" fill="#000"/>
<rect x="147" y="414" width="225" height="1" fill="#000"/>
<rect x="146" y="434" width="19" height="1" fill="#000"/>
<rect x="354" y="434" width="20" height="1" fill="#000"/>
<rect x="467" y="354" width="1" height="147" fill="#000"/>
<rect x="467" y="515" width="1" height="146" fill="#000"/>
<rect x="467" y="675" width="1" height="147" fill="#000"/>
<rect x="558" y="337" width="1" height="20" fill="#000"/>
<rect x="528" y="339" width="34" height="1" fill="#000"/>
<rect x="528" y="354" width="34" height="1" fill="#000"/>
<rect x="558" y="498" width="1" height="20" fill="#000"/>
<rect x="528" y="500" width="34" height="1" fill="#000"/>
<rect x="528" y="515" width="34" height="1" fill="#000"/>
<rect x="558" y="658" width="1" height="20" fill="#000"/>
<rect x="528" y="660" width="34" height="1" fill="#000"/>
<rect x="528" y="675" width="34" height="1" fill="#000"/>
<rect x="558" y="819" width="1" height="20" fill="#000"/>
<rect x="528" y="821" width="34" height="1" fill="#000"/>
<rect x="528" y="836" width="34" height="1" fill="#000"/>
<path d="M146.0,290.0 L150.0,286.0" stroke="#000" stroke-width="1" fill="none"/>
<path d="M370.0,290.0 L374.0,286.0" stroke="#000" stroke-width="1" fill="none"/>
<path d="M146.0,417.0 L150.0,413.0" stroke="#000" stroke-width="1" fill="none"/>
<path d="M258.0,417.0 L262.0,413.0" stroke="#000" stroke-width="1" fill="none"/>
<path d="M370.0,417.0 L374.0,413.0" stroke="#000" stroke-width="1" fill="none"/>
<path d="M146.0,437.0 L150.0,433.0" stroke="#000" stroke-width="1" fill="none"/>
<path d="M161.0,437.0 L165.0,433.0" stroke="#000" stroke-width="1" fill="none"/>
<path d="M355.0,437.0 L359.0,433.0" stroke="#000" stroke-width="1" fill="none"/>
<path d="M370.0,437.0 L374.0,433.0" stroke="#000" stroke-width="1" fill="none"/>
<path d="M107.0,342.0 L111.0,338.0" stroke="#000" stroke-width="1" fill="none"/>
<path d="M107.0,839.0 L111.0,835.0" stroke="#000" stroke-width="1" fill="none"/>
<path d="M466.0,357.0 L470.0,353.0" stroke="#000" stroke-width="1" fill="none"/>
<path d="M466.0,503.0 L470.0,499.0" stroke="#000" stroke-width="1" fill="none"/>
<path d="M466.0,518.0 L470.0,514.0" stroke="#000" stroke-width="1" fill="none"/>
<path d="M466.0,663.0 L470.0,659.0" stroke="#000" stroke-width="1" fill="none"/>
<path d="M466.0,678.0 L470.0,674.0" stroke="#000" stroke-width="1" fill="none"/>
<path d="M466.0,824.0 L470.0,820.0" stroke="#000" stroke-width="1" fill="none"/>
<path d="M557.0,342.0 L561.0,338.0" stroke="#000" stroke-width="1" fill="none"/>
<path d="M557.0,357.0 L561.0,353.0" stroke="#000" stroke-width="1" fill="none"/>
<path d="M557.0,503.0 L561.0,499.0" stroke="#000" stroke-width="1" fill="none"/>
<path d="M557.0,518.0 L561.0,514.0" stroke="#000" stroke-width="1" fill="none"/>
<path d="M557.0,663.0 L561.0,659.0" stroke="#000" stroke-width="1" fill="none"/>
<path d="M557.0,678.0 L561.0,674.0" stroke="#000" stroke-width="1" fill="none"/>
<path d="M557.0,824.0 L561.0,820.0" stroke="#000" stroke-width="1" fill="none"/>
<path d="M557.0,839.0 L561.0,835.0" stroke="#000" stroke-width="1" fill="none"/>
<rect x="232" y="270" width="53" height="11" fill="#fff"/>
<text font-family="'Liberation Sans',sans-serif" fill="#000" font-size="10" x="233.500" y="279.500" textLength="50" lengthAdjust="spacing">Ancho = 90</text>
<text font-family="'Liberation Sans',sans-serif" fill="#000" font-size="9.500" x="196.800" y="406.300" textLength="12" lengthAdjust="spacingAndGlyphs">EQ</text>
<text font-family="'Liberation Sans',sans-serif" fill="#000" font-size="9.500" x="308.700" y="406.300" textLength="12" lengthAdjust="spacingAndGlyphs">EQ</text>
<text font-family="'Liberation Sans',sans-serif" fill="#000" font-size="9.500" x="151.500" y="428">6</text>
<text font-family="'Liberation Sans',sans-serif" fill="#000" font-size="9.500" x="360" y="428">6</text>
<text font-family="'Liberation Sans',sans-serif" fill="#000" font-size="10.5" transform="translate(460.8,455) rotate(-90)" textLength="54" lengthAdjust="spacingAndGlyphs">Hueco = 59</text>
<text font-family="'Liberation Sans',sans-serif" fill="#000" font-size="10.5" transform="translate(460.4,592.6) rotate(-90)" textLength="11" lengthAdjust="spacingAndGlyphs">59</text>
<text font-family="'Liberation Sans',sans-serif" fill="#000" font-size="10.5" transform="translate(460.4,753.4) rotate(-90)" textLength="11" lengthAdjust="spacingAndGlyphs">59</text>
<text font-family="'Liberation Sans',sans-serif" fill="#000" font-size="10.5" transform="translate(101.5,615.6) rotate(-90)" textLength="56.6" lengthAdjust="spacingAndGlyphs">Altura = 200</text>
<text font-family="'Liberation Sans',sans-serif" fill="#000" font-size="10.5" transform="translate(550,349.4) rotate(-90)" textLength="6" lengthAdjust="spacingAndGlyphs">6</text>
<text font-family="'Liberation Sans',sans-serif" fill="#000" font-size="10.5" transform="translate(550,510.5) rotate(-90)" textLength="6" lengthAdjust="spacingAndGlyphs">6</text>
<text font-family="'Liberation Sans',sans-serif" fill="#000" font-size="10.5" transform="translate(550,670.5) rotate(-90)" textLength="6" lengthAdjust="spacingAndGlyphs">6</text>
<text font-family="'Liberation Sans',sans-serif" fill="#000" font-size="10.5" transform="translate(550,831.5) rotate(-90)" textLength="6" lengthAdjust="spacingAndGlyphs">6</text>
</svg>
  <div id="dlgshadow" class="abs"></div>
  <div id="dlg" class="abs"><div id="dlgin" class="abs">
<div class="abs" style="left:619px;top:245px;width:618px;height:30px;background:#f3f3f3"></div>
<span class="tx" style="left:628.6px;top:253.41px;font-size:11.8px;line-height:14px;color:#8b8b8b;">Tipos de familia</span>
<svg class="abs" style="left:1214px;top:251px" width="16" height="16" viewBox="0 0 16 16"><path d="M3,3 L13,13 M13,3 L3,13" stroke="#8a8a8a" stroke-width="1" fill="none"/></svg>
<span class="tx" style="left:629.8px;top:290.49px;font-size:10.7px;line-height:14px;color:#000;">Nombre de tipo:</span>
<div class="abs" style="left:712px;top:289px;width:414px;height:19px;background:#f8f8f8;border-radius:3px"></div>
<svg class="abs" style="left:1112px;top:294px" width="13" height="10" viewBox="0 0 13 10"><path d="M2.400,2.800 L6.400,6.800 L10.400,2.800" stroke="#b9b9b9" stroke-width="1" fill="none"/></svg>
<svg class="abs" style="left:1140px;top:289px" width="80" height="20" viewBox="0 0 80 20">
<path d="M4.500,5.500 L11,5.500 L15.500,10 L15.500,17.500 L4.500,17.500 Z" fill="#e4e9f0" stroke="#454545" stroke-width="1"/><path d="M11,5.500 L11,10 L15.500,10 Z" fill="#f8f9fb" stroke="#454545" stroke-width="1" stroke-linejoin="round"/>
<path d="M4.500,1.800 L4.500,8.200 M1.300,5 L7.700,5 M2.300,2.800 L6.700,7.200 M6.700,2.800 L2.300,7.200" stroke="#e8860c" stroke-width="1.200"/>
<rect x="32.500" y="3.500" width="15" height="12" fill="#f5f7f9" stroke="#a3a8ae" stroke-width="1"/><rect x="34.500" y="5.500" width="8" height="8" fill="#a3c9e6"/><path d="M35.800,12.800 L38.300,6.800 L40.800,12.800 M36.800,10.800 L39.800,10.800" stroke="#6b8fae" stroke-width=".9" fill="none"/><path d="M44,5 L44,14 M42.800,5 L45.200,5 M42.800,14 L45.200,14" stroke="#3c3c3c" stroke-width="1" fill="none"/>
<path d="M66.500,5.500 L72,5.500 L76.500,10 L76.500,17.500 L66.500,17.500 Z" fill="#ececf1" stroke="#b3b3b3" stroke-width="1"/><path d="M72,5.500 L72,10 L76.500,10 Z" fill="#f8f8fa" stroke="#b3b3b3" stroke-width="1" stroke-linejoin="round"/>
<path d="M63,2.500 L69,8.500 M69,2.500 L63,8.500" stroke="#d8606a" stroke-width="1.800"/>
</svg>
<div class="abs" style="left:631px;top:322px;width:592px;height:19px;background:#fff;border-bottom:1px solid #8c8c8c"></div>
<span class="tx" style="left:632.8px;top:323.09px;font-size:10.7px;line-height:14px;color:#4e5853;text-shadow:0 0 .5px #4e5853;">Parámetros de búsqueda</span>
<svg class="abs" style="left:1205px;top:322px" width="18" height="18" viewBox="0 0 18 18"><circle cx="6.800" cy="6.800" r="4.700" fill="#e3edf3" stroke="#767676" stroke-width="1.200"/><path d="M10.300,10.300 L15,15" stroke="#555" stroke-width="2.200" stroke-linecap="round"/></svg>
<div class="abs" style="left:630px;top:350px;width:592px;height:359px;background:#fff;border-left:1px solid #909090;border-top:1px solid #909090"></div>
<div class="abs" style="left:631px;top:351px;width:590px;height:357px;border-left:1px solid #565656;border-top:1px solid #565656"></div>
<div class="abs" style="left:632px;top:352px;width:589px;height:20px;background:#f0f0f0"></div>
<div class="abs" style="left:632px;top:372px;width:589px;height:1px;background:#000"></div>
<div class="abs" style="left:807px;top:352px;width:1px;height:21px;background:#000"></div>
<div class="abs" style="left:984px;top:352px;width:1px;height:21px;background:#000"></div>
<div class="abs" style="left:1167px;top:352px;width:1px;height:21px;background:#000"></div>
<div class="abs" style="left:1220px;top:352px;width:1px;height:21px;background:#000"></div>
<span class="tx" style="left:632px;top:354.88px;font-size:11.9px;line-height:14px;color:#000;width:175px;text-align:center;">Parámetro</span>
<span class="tx" style="left:808px;top:354.88px;font-size:11.9px;line-height:14px;color:#000;width:176px;text-align:center;">Valor</span>
<span class="tx" style="left:985px;top:354.88px;font-size:11.9px;line-height:14px;color:#000;width:182px;text-align:center;">Fórmula</span>
<span class="tx" style="left:1168px;top:354.95px;font-size:11.7px;line-height:14px;color:#000;width:53px;text-align:center;">Bloquear</span>
<div class="abs" style="left:632px;top:373px;width:589px;height:22px;background:#9ab3d3;border-bottom:1px solid #3a3f48"></div>
<span class="tx" style="left:634px;top:378.05px;font-size:11.4px;line-height:14px;color:#000;font-weight:bold;">Cotas</span>
<div class="abs" style="left:632px;top:449px;width:589px;height:22px;background:#9ab3d3;border-bottom:1px solid #3a3f48"></div>
<span class="tx" style="left:634px;top:454.45px;font-size:11.4px;line-height:14px;color:#000;font-weight:bold;">Parámetros IFC</span>
<div class="abs" style="left:632px;top:507px;width:589px;height:22px;background:#9ab3d3;border-bottom:1px solid #3a3f48"></div>
<span class="tx" style="left:634px;top:512.35px;font-size:11.4px;line-height:14px;color:#000;font-weight:bold;">Datos de identidad</span>
<svg class="abs" style="left:0;top:0" width="1293" height="600" viewBox="0 0 1293 600"><path d="M1209.500,383.5 L1212,381.0 L1214.500,383.5 M1209.500,387.5 L1212,385.0 L1214.500,387.5 M1209.500,459.5 L1212,457.0 L1214.500,459.5 M1209.500,463.5 L1212,461.0 L1214.500,463.5 M1209.500,514.5 L1212,517.0 L1214.500,514.5 M1209.500,518.5 L1212,521.0 L1214.500,518.5" stroke="#000" stroke-width="1.400" fill="none"/></svg>
<div class="abs hd" style="left:632px;top:412px;width:589px"></div>
<div class="abs hd" style="left:632px;top:430px;width:589px"></div>
<div class="abs hd" style="left:632px;top:448px;width:589px"></div>
<div class="abs hd" style="left:632px;top:488px;width:589px"></div>
<div class="abs hd" style="left:632px;top:506px;width:589px"></div>
<div class="abs hd" style="left:632px;top:707px;width:589px"></div>
<div class="abs vd" style="left:807px;top:395px;height:54px"></div>
<div class="abs vd" style="left:984px;top:395px;height:54px"></div>
<div class="abs vd" style="left:1167px;top:395px;height:54px"></div>
<div class="abs vd" style="left:1220px;top:395px;height:54px"></div>
<div class="abs vd" style="left:807px;top:471px;height:36px"></div>
<div class="abs vd" style="left:984px;top:471px;height:36px"></div>
<div class="abs vd" style="left:1167px;top:471px;height:36px"></div>
<div class="abs vd" style="left:1220px;top:471px;height:36px"></div>
<div class="abs vd" style="left:807px;top:529px;height:179px"></div>
<div class="abs vd" style="left:984px;top:529px;height:179px"></div>
<div class="abs vd" style="left:1167px;top:529px;height:179px"></div>
<div class="abs vd" style="left:1220px;top:529px;height:179px"></div>
<span class="tx" style="left:634px;top:395.64px;font-size:12px;line-height:14px;color:#000;">Altura</span>
<span class="tx" style="left:810px;top:395.64px;font-size:12px;line-height:14px;color:#000;letter-spacing:-.6px;">200.0</span>
<span class="tx" style="left:985.5px;top:395.64px;font-size:12px;line-height:14px;color:#000;">=</span>
<span class="tx" style="left:634px;top:413.74px;font-size:12px;line-height:14px;color:#000;">Ancho</span>
<span class="tx" style="left:810px;top:413.74px;font-size:12px;line-height:14px;color:#000;letter-spacing:-.6px;">90.0</span>
<span class="tx" style="left:985.5px;top:413.74px;font-size:12px;line-height:14px;color:#000;">=</span>
<span class="tx" style="left:634px;top:431.54px;font-size:12px;line-height:14px;color:#000;">Hueco</span>
<span class="tx" style="left:810px;top:431.54px;font-size:12px;line-height:14px;color:#000;letter-spacing:-.6px;">58.7</span>
<span class="tx" style="left:985.5px;top:431.54px;font-size:12px;line-height:14px;color:#000;">= (Altura - (4 mm * 6)) / 3</span>
<span class="tx" style="left:634px;top:471.64px;font-size:12px;line-height:14px;color:#000;letter-spacing:.1px;">Introducir el tipo predefinido de</span>
<span class="tx" style="left:985.5px;top:471.64px;font-size:12px;line-height:14px;color:#000;">=</span>
<span class="tx" style="left:634px;top:489.64px;font-size:12px;line-height:14px;color:#000;letter-spacing:-.16px;">Exportar tipo a IFC como</span>
<span class="tx" style="left:985.5px;top:489.64px;font-size:12px;line-height:14px;color:#000;">=</span>
<div class="abs" style="left:808px;top:395px;width:176px;height:17px;border:2px solid #111;border-bottom-width:1.500px"></div>
<div class="abs" style="left:1171px;top:398px;width:13px;height:13px;border:1px solid #7d7d7d;border-radius:3px;background:#f4f4f4"></div>
<div class="abs" style="left:1171px;top:416px;width:13px;height:13px;border:1px solid #7d7d7d;border-radius:3px;background:#f4f4f4"></div>
<div class="abs" style="left:1171px;top:434px;width:13px;height:13px;border:1px solid #7d7d7d;border-radius:3px;background:#f4f4f4"></div>
<svg class="abs" style="left:630px;top:720px" width="280" height="24" viewBox="630 720 280 24">
<path d="M634,738.500 L635.300,734 L646.500,723.300 L649.700,726.500 L638.500,737.300 Z" fill="#d9c48e" stroke="#5a5a5a" stroke-width="1"/><path d="M634,738.500 L635.300,734 L638.500,737.300 Z" fill="#fff" stroke="#5a5a5a" stroke-width=".8"/><path d="M645,724.800 L648.200,728" stroke="#5a5a5a" stroke-width="1"/>
<path d="M667.500,727.500 L674,727.500 L678.500,732 L678.500,738.500 L667.500,738.500 Z" fill="#fafafa" stroke="#555" stroke-width="1"/><path d="M674,727.500 L674,732 L678.500,732" fill="none" stroke="#555"/>
<path d="M667.500,723 L667.500,730 M664,726.500 L671,726.500 M665,724 L670,729 M670,724 L665,729" stroke="#e8960c" stroke-width="1.300"/>
<path d="M694.500,723.500 L702,723.500 L705.500,727 L705.500,737.500 L694.500,737.500 Z" fill="#fafafa" stroke="#555"/><path d="M697,728.500 L703,728.500 M697,731.500 L703,731.500 M697,734.500 L700,734.500" stroke="#555"/>
<path d="M702,738.500 A3,3 0 0 1 702.500,732.800 A3.200,3.200 0 0 1 708.300,733.500 A2.600,2.600 0 0 1 708.500,738.500 Z" fill="#e8f0fb" stroke="#3568b0" stroke-width="1"/>
<path d="M727.500,727.500 L734,727.500 L738.500,732 L738.500,738.500 L727.500,738.500 Z" fill="#fafafa" stroke="#555"/><path d="M734,727.500 L734,732 L738.500,732" fill="none" stroke="#555"/>
<path d="M725,723.500 L731,729.500 M731,723.500 L725,729.500" stroke="#cf2a27" stroke-width="2"/>
<path d="M754.500,723.500 L761,723.500 L761,726 L757.500,726 L757.500,735.500 L754.500,735.500 Z" fill="#fafafa" stroke="#555"/>
<path d="M758.500,727.500 L765.500,727.500 L769.500,731 L769.500,738.500 L758.500,738.500 Z" fill="#f4f4f6" stroke="#555"/>
<path d="M786.500,738 L786.500,730 M783.800,730.500 L786.500,726.500 L789.200,730.500 Z" stroke="#8f979c" stroke-width="1.800" fill="#8f979c"/>
<path d="M792.500,724 L792.500,738.500 M792.500,724.500 L800,724.500 M792.500,731.500 L799,731.500 M792.500,738 L800,738" stroke="#b4c3cf" stroke-width="1.200" fill="none"/>
<path d="M816.500,724 L816.500,734 M813.300,733 L816.500,737.800 L819.700,733 Z" stroke="#1568b3" stroke-width="2" fill="#1568b3"/>
<path d="M823,724 L823,738.500 M823,724.700 L830,724.700 M823,731.500 L829,731.500 M823,737.800 L830,737.800" stroke="#3b8fd0" stroke-width="1.400" fill="none"/>
<path d="M869.500,723.500 L869.500,736" stroke="#222" stroke-width="1.100"/><path d="M866.800,734.800 L869.500,738.600 L872.200,734.800 Z" fill="#222"/>
<path d="M899.500,723.500 L899.500,736" stroke="#222" stroke-width="1.100"/><path d="M896.800,734.800 L899.500,738.600 L902.200,734.800 Z" fill="#222"/>
<g font-family="'Liberation Sans',sans-serif" font-size="10.500">
<text x="856" y="730.500" fill="#2a86d0">A</text><text x="856.300" y="739.500" fill="#4a4a4a">Z</text>
<text x="886.600" y="730.500" fill="#4a4a4a">Z</text><text x="886.300" y="739.500" fill="#2a86d0">A</text>
</g>
</svg>
<div class="btn" style="left:1081px;top:721px;width:144px"></div>
<span class="tx" style="left:1084.7px;top:724.99px;font-size:10.7px;line-height:14px;color:#000;">Gestionar tablas de consulta</span>
<div class="btn" style="left:980px;top:757px;width:76px"></div>
<span class="tx" style="left:998.8px;top:760.79px;font-size:10.7px;line-height:14px;color:#000;">Aceptar</span>
<div class="btn" style="left:1064px;top:757px;width:76px"></div>
<span class="tx" style="left:1080.6px;top:760.83px;font-size:10.6px;line-height:14px;color:#000;">Cancelar</span>
<div class="btn" style="left:1148px;top:757px;width:76px"></div>
<span class="tx" style="left:1169.6px;top:760.83px;font-size:10.6px;line-height:14px;color:#000;">Aplicar</span>
<span class="tx" style="left:629.8px;top:755.98px;font-size:10.45px;line-height:14px;color:#0a5fc0;text-decoration:underline;text-underline-offset:1.500px;">¿Cómo se gestionan los tipos de familia?</span>
<svg class="abs" style="left:1226px;top:781px" width="10" height="10" viewBox="0 0 10 10"><g fill="#b0b0b0"><rect x="7" y="1" width="1.500" height="1.500"/><rect x="4" y="4" width="1.500" height="1.500"/><rect x="7" y="4" width="1.500" height="1.500"/><rect x="1" y="7" width="1.500" height="1.500"/><rect x="4" y="7" width="1.500" height="1.500"/><rect x="7" y="7" width="1.500" height="1.500"/></g></svg>
  </div></div>
  <svg id="marks" class="abs" style="left:0;top:0" width="1293" height="998" viewBox="0 0 1293 998">
    <g fill="none" stroke="#e01b21" stroke-linecap="round" stroke-linejoin="round">
      <rect x="120.300" y="51.600" width="55.400" height="52.800" stroke-width="4.800" stroke-linejoin="miter"/>
      <path d="M146,100 L604,249.300" stroke-width="4.500"/>
      <path d="M628,420.600 L273.600,292.800" stroke-width="4.200" stroke-linecap="butt"/>
      <path d="M626.400,399.400 L127,573.700" stroke-width="4.200" stroke-linecap="butt"/>
      <path d="M628,437.500 L493,431.100" stroke-width="4.200"/>
      <path d="M628,437.500 L486,574.400" stroke-width="4.200"/>
      <path d="M628,437.500 L579.400,535.800 L545.300,606 L512,665.600 L480,729.300" stroke-width="4.200"/>
    </g>
    <g fill="#e01b21">
      <path d="M621.700,255.400 L606.800,240.200 L600.400,258.200 Z"/>
      <path d="M256,287.800 L277,284.500 L270.200,302.700 Z"/>
      <path d="M108.200,579 L123.800,564.700 L130,582.700 Z"/>
      <path d="M474,430 L493.400,421.800 L492.600,440.400 Z"/>
      <path d="M472.300,586.700 L479.300,567.400 L492.600,581.400 Z"/>
      <path d="M472.300,745.600 L471.600,725.300 L488.400,733.300 Z"/>
    </g>
  </svg>

</div>
</body>
</html>
